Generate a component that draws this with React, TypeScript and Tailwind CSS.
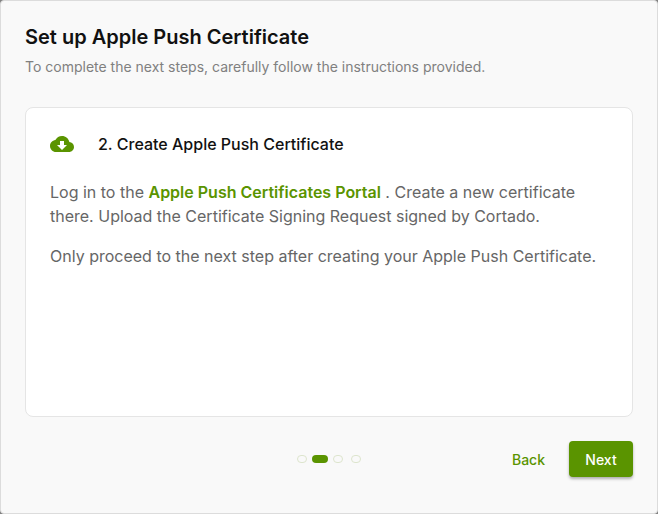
import React from "react";

const steps = [1, 2, 3, 4];
const currentStep = 2;

export default function App() {
  return (
    <div className="bg-[#808080]">
      <main className="flex min-h-screen flex-col rounded-sm border border-[#dcdcdc] bg-[#f9f9f9] p-6 font-['Inter',sans-serif]">
        <header>
          <h1 className="text-xl leading-6 font-semibold text-[#111111]">Set up Apple Push Certificate</h1>
          <p className="mt-1.5 text-sm leading-6 text-[#808080]">
            To complete the next steps, carefully follow the instructions provided.
          </p>
        </header>

        <section className="mt-7 flex-1 rounded-lg border border-[#e5e5e5] bg-white p-6">
          <div className="flex items-center gap-6">
            <svg className="size-6 text-[#5a9400]" viewBox="0 0 24 24" fill="currentColor" aria-hidden="true">
              <path d="M19.35 10.04C18.67 6.59 15.64 4 12 4 9.11 4 6.6 5.64 5.35 8.04 2.34 8.36 0 10.91 0 14c0 3.31 2.69 6 6 6h13c2.76 0 5-2.24 5-5 0-2.64-2.05-4.78-4.65-4.96zM17 13l-5 5-5-5h3V9h4v4h3z" />
            </svg>
            <h2 className="text-base leading-6 font-medium text-[#111111]">2. Create Apple Push Certificate</h2>
          </div>
          <p className="mt-6 text-base leading-6 text-[#666666]">
            Log in to the{" "}
            <a href="#portal" className="font-semibold text-[#5a9400]">Apple Push Certificates Portal</a>{" "}
            . Create a new certificate there. Upload the Certificate Signing Request signed by Cortado.
          </p>
          <p className="mt-4 text-base leading-6 text-[#666666]">
            Only proceed to the next step after creating your Apple Push Certificate.
          </p>
        </section>

        <footer className="mt-6 mb-3 grid grid-cols-[1fr_auto_1fr] items-center">
          <ol className="col-start-2 flex gap-2" aria-label="Progress">
            {steps.map((step) => (
              <li key={step} className="flex w-2.5 justify-center">
                <span
                  aria-current={step === currentStep ? "step" : undefined}
                  className={
                    step === currentStep
                      ? "h-2 w-4 shrink-0 rounded-full bg-[#5a9400]"
                      : "h-2 w-2.5 shrink-0 rounded-full border border-[#dde5cd]"
                  }
                />
              </li>
            ))}
          </ol>
          <div className="flex justify-end gap-2">
            <button type="button" className="h-9 px-4 pt-0.5 text-sm font-medium text-[#5a9400]">Back</button>
            <button type="button" className="h-9 w-16 rounded bg-[#5a9400] pt-0.5 text-sm font-medium text-white shadow-[0_2px_3px_rgba(0,0,0,0.3)]">Next</button>
          </div>
        </footer>
      </main>
    </div>
  );
}
